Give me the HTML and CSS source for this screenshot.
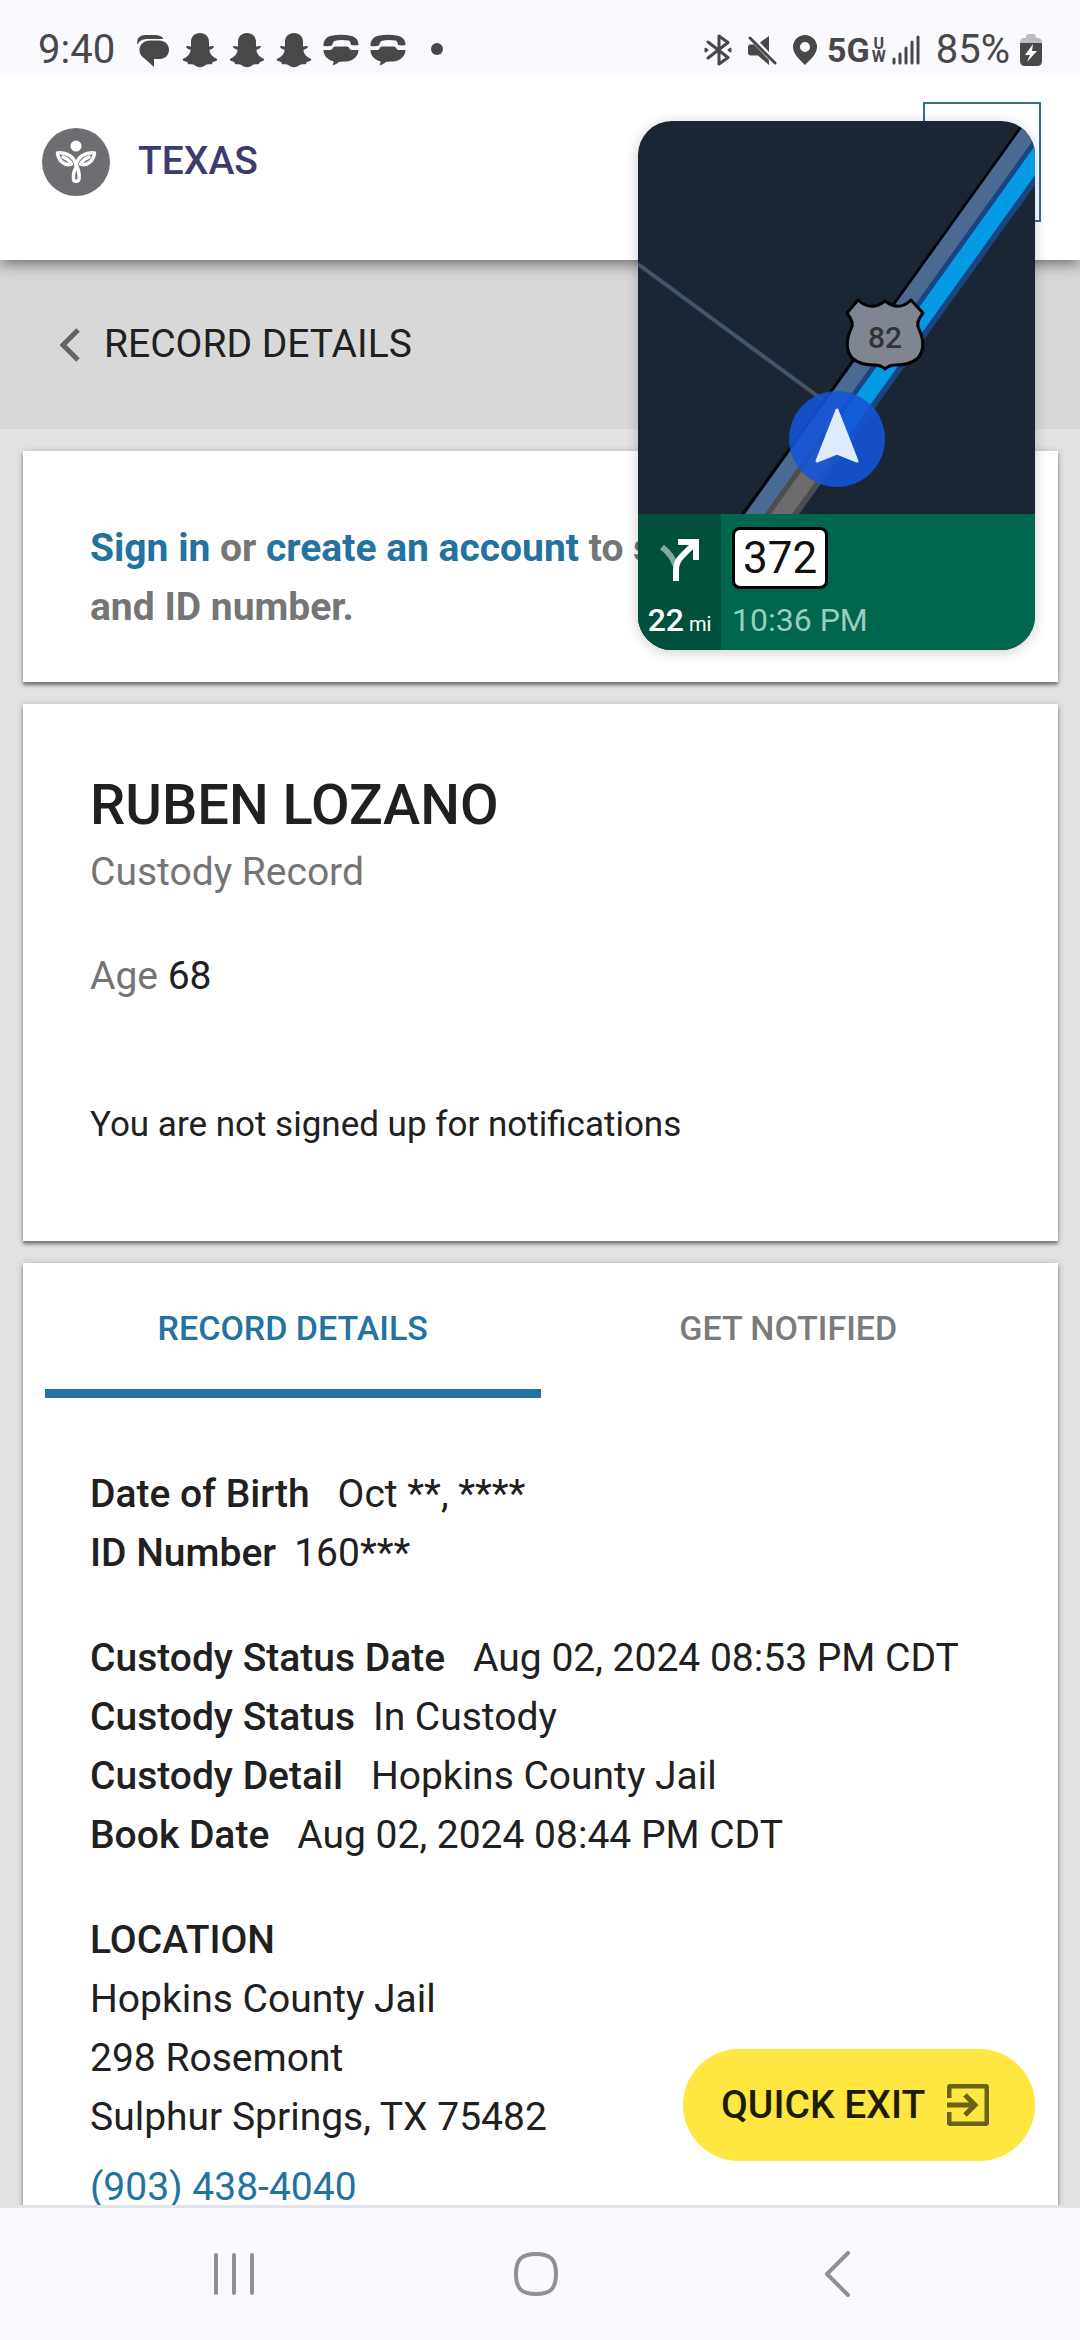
FILE: index.html
```html
<!DOCTYPE html>
<html lang="en">
<head>
    <meta charset="UTF-8">
    <meta name="viewport" content="width=device-width, initial-scale=1.0">
    <title>Record Details</title>
    <link rel="stylesheet" href="styles.css">
</head>
<body>
    <!-- shared icons -->
    <svg width="0" height="0" class="icon-defs" aria-hidden="true">
        <symbol id="ghost" viewBox="0 0 36 36">
            <path d="M18 1C12.500 1 9 4.500 9 10v4.500C7.500 14.800 6 13.300 4.300 14.300C3.500 15.300 5 16.500 8.600 18C8.200 22 5 25.500 .8 27C.5 29 3 29.500 5.200 30C6 31 5.600 32 7 32.200C9 32.300 11 31.800 13 33.500C16.500 35.700 19.500 35.700 23 33.500C25 31.800 27 32.300 29 32.200C30.400 32 30 31 30.800 30C33 29.500 35.500 29 35.200 27C31 25.500 27.800 22 27.400 18C31 16.500 32.500 15.300 31.700 14.300C30 13.300 28.500 14.800 27 14.500V10C27 4.500 23.500 1 18 1z"/>
        </symbol>
        <symbol id="call-chat" viewBox="0 0 36 36">
            <path d="M.5 14c0-6 2.500-9 8-10.300c6-1.200 13-1.200 19 0c5.500 1.300 8 4.300 8 9.300c-2 .6-5 .6-7.500 0c-.3-2.500-1-4-2.500-4.400c-5-.7-10-.7-14 .4c-2 1-1.500 3.500-3 4.800c-2.500.6-5.500.6-8 .2z"/>
            <path d="M.5 18h7c2 0 2.500-3.500 4.500-3.500h12c2 0 2.500 3.500 4.500 3.500h7c0 5-4 9.800-9.500 11c-3 .6-7.500.8-9.500.8c-2 1.500-4.500 3-7 3.700c.8-1.300 1-3 1-4.200C4.500 28 .5 23.500 .5 18z"/>
        </symbol>
    </svg>

    <div class="status-bar">
        <span class="status-text">9:40</span>
        <div class="status-icons">
            <svg viewBox="0 0 36 36">
                <path d="M2.500 13C1 6.500 5 3 10 3h10c4 0 7 1 8.500 4H13C7 7 4 9 2.500 13z"/>
                <path d="M15 8.500h9c6 0 10 4 10 9.300c0 5.500-4 9.200-9 9.200h-6v8L9 26c-3-1.500-4.500-4.500-4.500-8.200c0-5.300 4.500-9.300 10.500-9.300z"/>
            </svg>
            <svg><use href="#ghost"/></svg>
            <svg><use href="#ghost"/></svg>
            <svg><use href="#ghost"/></svg>
            <svg><use href="#call-chat"/></svg>
            <svg><use href="#call-chat"/></svg>
            <svg viewBox="0 0 36 36"><circle cx="20" cy="17" r="6"/></svg>
        </div>
        <div class="status-right">
            <svg width="28" height="32" viewBox="0 0 28 32" fill="none" stroke="#484848" stroke-width="3" stroke-linecap="round" stroke-linejoin="round">
                <path d="M4 8l20 15.500l-9 6.500V2l9 6.500L4 24"/>
                <path d="M1.500 14.500v3l2-1.500zM26.500 14.500v3l-2-1.500z" stroke-width="2"/>
            </svg>
            <svg class="mute" width="30" height="30" viewBox="0 0 30 30">
                <path d="M22 1v16L13 7.500zM1 12c0-1.500 1-2.500 2.500-2.500H7l15 15.500v5L11 20.500H3.500C2 20.500 1 19.500 1 18z"/>
                <path d="M3 3l25 25" stroke="#484848" stroke-width="3" stroke-linecap="round"/>
            </svg>
            <svg class="pin" width="24" height="30" viewBox="0 0 24 30">
                <path fill-rule="evenodd" d="M12 0a12 12 0 0 1 12 12c0 7-7 13-12 18C7 25 0 19 0 12A12 12 0 0 1 12 0zM12 7a5 5 0 1 0 0 10a5 5 0 0 0 0-10z"/>
            </svg>
            <span class="network">5G</span>
            <span class="network-band"><span>U</span><span>W</span></span>
            <svg class="signal" width="28" height="30" viewBox="0 0 28 30" stroke="#484848" stroke-width="3" stroke-linecap="round">
                <path d="M2 24v4M8 19v9M14 13v15M20 7v21M26 2v26"/>
            </svg>
            <span class="status-text">85%</span>
            <svg width="22" height="32" viewBox="0 0 22 32">
                <path fill="#bdbdc1" d="M6 3q0-3 3-3h4q3 0 3 3v1h2q4 0 4 5H0q0-5 4-5h2z"/>
                <path d="M0 9h22v18q0 5-5 5H5q-5 0-5-5z"/>
                <path fill="#fff" d="M13 10L5 21h5l-3 7l10-11h-5z"/>
            </svg>
        </div>
    </div>

    <header class="header">
        <svg class="logo" viewBox="0 0 68 68">
            <circle cx="34" cy="34" r="34" fill="#6d6e71"/>
            <circle cx="34" cy="18" r="5.500" fill="#fff"/>
            <g fill="none" stroke="#fff" stroke-width="3.500" stroke-linejoin="round" stroke-linecap="round">
                <path d="M34 37C32 28 24 24 15.500 25C16.500 33 23 38.500 29.500 36C27 32 24 30 21 29"/>
                <path d="M34 37C36 28 44 24 52.500 25C51.500 33 45 38.500 38.500 36C41 32 44 30 47 29"/>
                <path d="M34 37C37 42 37.500 47 37 51C36.500 54 31.500 54 31.500 51C31 45 32 42 35 38"/>
            </g>
        </svg>
        <span class="state-name">TEXAS</span>
        <button class="menu-button" aria-label="Menu"></button>
    </header>

    <div class="title-bar">
        <a href="#" class="back-link" aria-label="Back">
            <svg width="20" height="34" viewBox="0 0 20 34"><path d="M18 2L3 17l15 15" fill="none" stroke="#636363" stroke-width="5"/></svg>
        </a>
        <h1>RECORD DETAILS</h1>
    </div>

    <main class="content">
        <section class="card sign-in">
            <p><a href="#">Sign in</a> or <a href="#">create an account</a> to see date of birth and ID number.</p>
        </section>

        <section class="card person">
            <h2>RUBEN LOZANO</h2>
            <p class="muted">Custody Record</p>
            <p class="age"><span class="muted">Age</span> 68</p>
            <p class="notice">You are not signed up for notifications</p>
        </section>

        <section class="card record">
            <div class="tabs">
                <button class="tab active">RECORD DETAILS</button>
                <button class="tab">GET NOTIFIED</button>
            </div>
            <div class="details">
                <dl>
                    <div><dt>Date of Birth</dt><dd>Oct **, ****</dd></div>
                    <div class="tight"><dt>ID Number</dt><dd>160***</dd></div>
                </dl>
                <dl>
                    <div><dt>Custody Status Date</dt><dd>Aug 02, 2024 08:53 PM CDT</dd></div>
                    <div class="tight"><dt>Custody Status</dt><dd>In Custody</dd></div>
                    <div><dt>Custody Detail</dt><dd>Hopkins County Jail</dd></div>
                    <div><dt>Book Date</dt><dd>Aug 02, 2024 08:44 PM CDT</dd></div>
                </dl>
                <div class="location">
                    <h3>LOCATION</h3>
                    <p>Hopkins County Jail</p>
                    <p>298 Rosemont</p>
                    <p>Sulphur Springs, TX 75482</p>
                    <a href="tel:9034384040">(903) 438-4040</a>
                </div>
            </div>
        </section>
    </main>

    <button class="quick-exit">
        QUICK EXIT
        <svg width="42" height="42" viewBox="0 0 42 42" fill="none" stroke="#6b6117" stroke-width="5">
            <path d="M2 14V5q0-3 3-3h32q3 0 3 3v32q0 3-3 3H5q-3 0-3-3v-9M0 21h28M18 11l10 10l-10 10"/>
        </svg>
    </button>

    <nav class="nav-bar">
        <button aria-label="Recents">
            <svg width="44" height="46" viewBox="0 0 44 46"><path d="M4 4v38M22 4v38M40 4v38"/></svg>
        </button>
        <button aria-label="Home">
            <svg width="44" height="46" viewBox="0 0 44 46"><path d="M22 3C36 3 42 8 42 23S36 43 22 43S2 38 2 23S8 3 22 3z"/></svg>
        </button>
        <button aria-label="Back">
            <svg width="44" height="46" viewBox="0 0 44 46"><path d="M32 2L11 23l21 21"/></svg>
        </button>
    </nav>

    <!-- navigation window floating over the page -->
    <aside class="pip">
        <svg class="map" viewBox="0 0 397 393">
            <path d="M0 143L189 282" stroke="#44546b" stroke-width="4"/>
            <path fill="#000409" d="M103 393L393-10H397V0L110 393z"/>
            <path fill="#4a6a94" d="M107 393L396-10H420L130 393z"/>
            <path fill="#1a4583" d="M127 393L416-10H450L161 393z"/>
            <path fill="#059ae4" d="M133 393L422-10H443L154 393z"/>
            <path fill="#4d4d4d" d="M127 393L181 317H216L161 393z"/>
            <path fill="#6b6b6b" d="M133 393L187 317H209L154 393z"/>
            <path d="M220 179Q233 191 247 180Q261 191 273 179L285 192Q277 202 281 208Q289 226 280 237Q272 244 258 244Q251 244 247 248Q243 244 236 244Q222 244 214 237Q205 226 213 208Q217 202 209 192z" fill="#7f8691" stroke="#000" stroke-width="3" stroke-linejoin="round"/>
            <text class="route" x="247" y="227" text-anchor="middle">82</text>
            <circle cx="199" cy="318" r="48" fill="#1555d8" fill-opacity=".88"/>
            <path d="M199 289L219 340L199 332L179 340z" fill="#dfebff" stroke="#dfebff" stroke-width="3" stroke-linejoin="round"/>
        </svg>
        <div class="directions">
            <div class="turn">
                <svg width="40" height="44" viewBox="0 0 40 44" fill="none" stroke-width="6">
                    <path d="M2 9Q13 18 15 27" stroke="#7fa99d"/>
                    <path d="M16 43V32Q16 24 22 18L35 5" stroke="#fff"/>
                    <path d="M18 4H36V22" stroke="#fff"/>
                </svg>
                <div class="miles"><b>22</b> mi</div>
            </div>
            <div class="eta">
                <span class="highway">372</span>
                <span class="arrival">10:36 PM</span>
            </div>
        </div>
    </aside>
</body>
</html>
```

FILE: styles.css
```css
* {
    box-sizing: border-box;
}
body {
    margin: 0;
    height: 100vh;
    display: flex;
    flex-direction: column;
    position: relative;
    overflow: hidden;
    background-color: #e2e2e2;
    color: #202020;
    font-family: Roboto, "Liberation Sans", sans-serif;
    font-size: 39px;
    line-height: 59px;
}
h1, h2, h3, p, dl, dd {
    margin: 0;
    font-size: inherit;
}
a {
    color: #2372a0;
    text-decoration: none;
}
button {
    font-family: inherit;
    border: none;
    background: none;
    padding: 0;
    cursor: pointer;
}
svg {
    display: block;
    flex: none;
}
.icon-defs {
    position: absolute;
}

/* status bar */
.status-bar {
    display: flex;
    align-items: center;
    flex: none;
    position: relative;
    z-index: 1;
    height: 76px;
    padding: 24px 38px 0;
    background-color: #faf9fe;
    color: #484848;
    fill: #484848;
    line-height: 48px;
}
.status-text {
    font-size: 40px;
}
.status-icons {
    display: flex;
    gap: 11px;
    margin-left: 20px;
}
.status-icons svg {
    width: 36px;
    height: 36px;
}
.status-right {
    display: flex;
    align-items: center;
    margin-left: auto;
}
.mute {
    margin-left: 15px;
}
.pin {
    margin-left: 16px;
    margin-right: 10px;
}
.network {
    font-size: 34px;
    font-weight: 700;
}
.network-band {
    display: flex;
    flex-direction: column;
    align-items: center;
    margin-left: 2px;
    font-size: 16px;
    font-weight: 700;
    line-height: 13px;
}
.signal {
    margin-left: 6px;
    margin-right: 16px;
}
.status-right .status-text {
    margin-right: 10px;
}

/* header */
.header {
    display: flex;
    align-items: center;
    flex: none;
    position: relative;
    height: 184px;
    padding: 0 39px 13px 42px;
    background-color: #fff;
    box-shadow: 0 4px 14px rgba(0,0,0,0.5);
}
.logo {
    width: 68px;
    height: 68px;
}
.state-name {
    margin-left: 28px;
    color: #3c3b6e;
    font-weight: 500;
}
.menu-button {
    width: 118px;
    height: 120px;
    margin-left: auto;
    border: 2px solid #31708f;
}
.title-bar {
    display: flex;
    align-items: center;
    flex: none;
    height: 169px;
    padding-left: 60px;
    background-color: #d8d8d8;
}
.title-bar h1 {
    margin-left: 24px;
    font-weight: 400;
}

/* cards */
.content {
    display: flex;
    flex-direction: column;
    flex: 1;
    gap: 22px;
    min-height: 0;
    padding: 22px 22px 0 23px;
    overflow: hidden;
}
.card {
    flex: none;
    background-color: #fff;
    box-shadow: 0 3px 3px rgba(0,0,0,0.4), 0 1px 8px rgba(0,0,0,0.2);
}
.sign-in {
    padding: 68px 67px 45px;
    color: #757575;
    font-weight: 700;
}
.person {
    padding: 67px 67px 87px;
}
.person h2 {
    margin-bottom: 4px;
    font-size: 56px;
    font-weight: 500;
    line-height: 68px;
}
.muted {
    color: #757575;
}
.age {
    margin-top: 45px;
}
.notice {
    margin-top: 89px;
    font-size: 35px;
}
.tabs {
    display: flex;
    padding: 0 22px;
}
.tab {
    flex: 1;
    height: 135px;
    padding-top: 4px;
    border-bottom: 9px solid transparent;
    color: #7b7b7b;
    font-size: 34px;
    font-weight: 500;
}
.tab.active {
    border-color: #2372a0;
    color: #2372a0;
}
.details {
    display: flex;
    flex-direction: column;
    gap: 46px;
    padding: 67px;
}
.details dl div {
    display: flex;
    gap: 28px;
}
.details dl .tight {
    gap: 18px;
}
.details dt,
.details h3 {
    font-weight: 500;
}
.location a {
    display: block;
    margin-top: 11px;
}

.quick-exit {
    display: flex;
    align-items: center;
    justify-content: space-between;
    position: absolute;
    right: 45px;
    bottom: 179px;
    width: 352px;
    height: 112px;
    padding: 0 46px 0 38px;
    border-radius: 56px;
    background-color: #ffe640;
    color: #1f1c05;
    font-size: 39px;
    font-weight: 500;
}

/* bottom navigation */
.nav-bar {
    display: flex;
    justify-content: center;
    flex: none;
    gap: 40px;
    position: relative;
    height: 135px;
    padding-right: 9px;
    border-top: 3px solid #e1e1e9;
    background-color: #faf9fe;
}
.nav-bar button {
    display: flex;
    align-items: center;
    justify-content: center;
    width: 262px;
}
.nav-bar svg {
    fill: none;
    stroke: #919194;
    stroke-width: 4px;
    stroke-linecap: round;
    stroke-linejoin: round;
}

/* floating map */
.pip {
    display: flex;
    flex-direction: column;
    position: absolute;
    z-index: 2;
    top: 121px;
    right: 45px;
    width: 397px;
    overflow: hidden;
    border-radius: 34px;
    background-color: #1b2635;
    box-shadow: 0 2px 14px rgba(0,0,0,0.2);
}
.map {
    width: 100%;
}
.route {
    fill: #303237;
    font-size: 30px;
    font-weight: 500;
}
.directions {
    display: flex;
    height: 136px;
    background-color: #00664d;
    color: #fff;
}
.turn {
    display: flex;
    flex-direction: column;
    align-items: center;
    gap: 20px;
    width: 83px;
    padding-top: 24px;
    background-color: #00503c;
}
.miles {
    font-size: 20px;
    line-height: 36px;
}
.miles b {
    font-size: 32px;
    font-weight: 500;
}
.eta {
    display: flex;
    flex-direction: column;
    align-items: flex-start;
    gap: 12px;
    padding: 13px 0 0 11px;
}
.highway {
    padding: 0 8px;
    border: 3px solid #000;
    border-radius: 8px;
    background-color: #fff;
    color: #111;
    font-size: 44px;
    line-height: 56px;
}
.arrival {
    color: #99cdbd;
    font-size: 32px;
    line-height: 38px;
}
```
